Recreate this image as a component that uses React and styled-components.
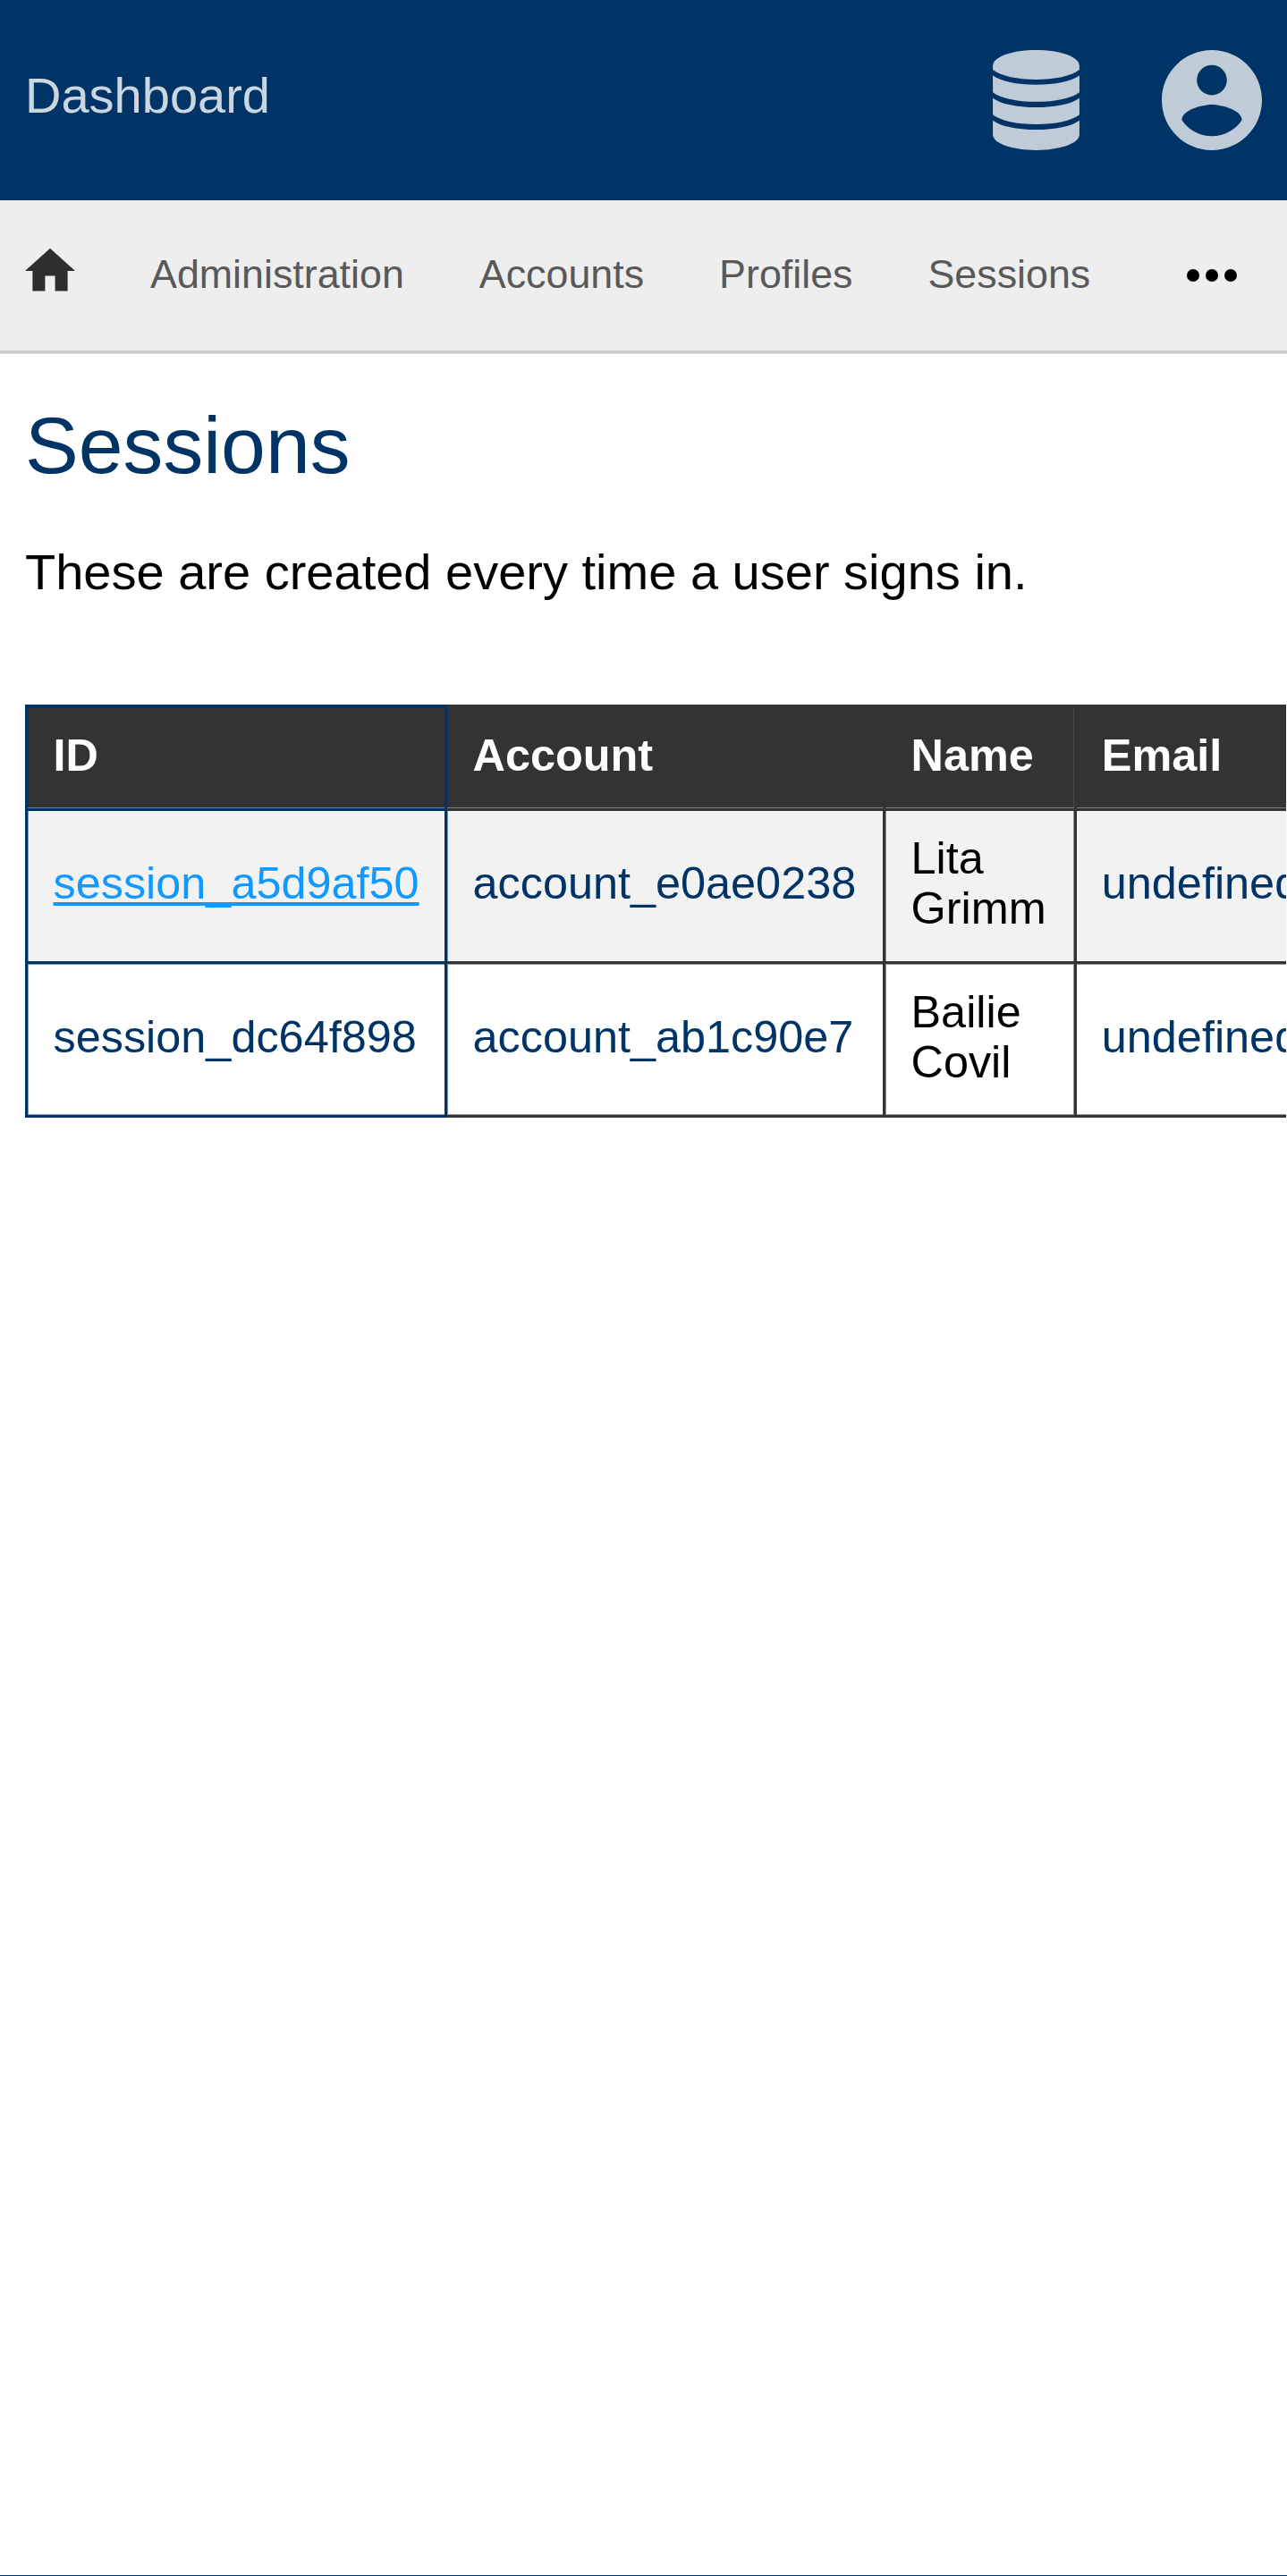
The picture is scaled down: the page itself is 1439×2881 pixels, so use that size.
import React from "react";
import styled, { createGlobalStyle } from "styled-components";

const NAVY = "#003366";
const INK = "#333333";

const GlobalStyle = createGlobalStyle`
  *, *::before, *::after { box-sizing: border-box; }
  html, body { margin: 0; padding: 0; }
  body {
    font-family: "Liberation Sans", Arial, sans-serif;
    font-size: 56px;
    color: #000;
    background: #fff;
  }
`;

const Page = styled.div`
  display: flex;
  flex-direction: column;
  width: 100%;
  height: 2881px;
  overflow: hidden;
  border-bottom: 1px solid ${NAVY};
`;

const Header = styled.header`
  display: flex;
  align-items: center;
  flex: none;
  height: 224px;
  padding: 0 28px;
  background: ${NAVY};
`;

const Brand = styled.a`
  flex: 1;
  padding-bottom: 11px;
  line-height: 63px;
  color: rgba(255, 255, 255, 0.8);
`;

const HeaderActions = styled.div`
  display: flex;
  gap: 84px;
  opacity: 0.75;
`;

const ActionIcon = styled.svg`
  display: block;
  width: 112px;
  height: 112px;
  fill: #fff;
`;

const Nav = styled.nav`
  display: flex;
  align-items: center;
  flex: none;
  gap: 84px;
  height: 171px;
  padding: 0 56px 0 28px;
  background: #eeeeee;
  border-bottom: 3px solid #cccccc;
  box-shadow: 0 1px 0 #e4e4e4;
  font-size: 44.8px;
`;

const NavIcon = styled.svg`
  display: block;
  flex: none;
  width: 56px;
  height: 56px;
  fill: ${(p) => p.$color};
  margin-bottom: ${(p) => p.$lift || 0}px;
  margin-left: ${(p) => (p.$end ? "auto" : "0")};
`;

const NavLink = styled.a`
  padding-bottom: 4px;
  line-height: 50px;
  white-space: nowrap;
  color: #595959;
`;

const Main = styled.main`
  padding: 53px 1px 0 28px;
`;

const Title = styled.h1`
  margin: 0;
  font-size: 89.6px;
  font-weight: 400;
  line-height: 100px;
  color: ${NAVY};
`;

const Intro = styled.p`
  margin: 60px 0 0;
  line-height: 63px;
`;

const TableScroller = styled.div`
  margin-top: 117px;
  overflow: hidden;
`;

const Table = styled.table`
  table-layout: fixed;
  width: 1572px;
  border-collapse: separate;
  border-spacing: 0;
  font-size: 50.4px;
  line-height: 56px;
`;

const Col = styled.col`
  width: ${(p) => p.$width}px;
`;

const HeadCell = styled.th`
  height: 119px;
  padding: 0 0 5px 28.5px;
  text-align: left;
  vertical-align: middle;
  color: #fff;
  background: ${INK};
  border: 3px solid ${INK};
  border-left-width: 0;
  box-shadow: inset 0 -1px 0 #808080;

  &:first-child {
    border-color: ${NAVY};
    border-left-width: 3px;
    box-shadow: inset 0 -1px 0 #66809a, inset 1px 1px 0 #1a334d;
  }

  &:nth-child(2) {
    box-shadow: inset 0 -1px 0 #808080, inset 1px 0 0 #1a334d;
  }

  &:nth-child(3) {
    box-shadow: inset 0 -1px 0 #808080, inset -1px 0 0 #4a4a4a;
  }

  &:last-child {
    padding-left: 27.8px;
  }
`;

const Cell = styled.td`
  padding: 0 0 0 28.5px;
  vertical-align: middle;
  color: ${(p) => (p.$plain ? "#000" : NAVY)};
  border: 0 solid ${INK};
  border-right-width: 3px;
  border-bottom-width: 3px;

  &:first-child {
    border-color: ${NAVY};
    border-left-width: 3px;
  }

  &:last-child {
    padding-left: 27.8px;
  }
`;

const BLUE_EDGE = "#7a96b1";
const GRAY_EDGE = "#949494";

const Row = styled.tr`
  background: ${(p) => (p.$shaded ? "#f2f2f2" : "#fff")};

  td {
    height: ${(p) => (p.$last ? 172 : 171)}px;
    padding-bottom: ${(p) => (p.$last ? 5 : 6)}px;
    --line: ${(p) =>
      p.$last
        ? `inset 0 1px 0 ${GRAY_EDGE}, inset 0 -1px 0 ${GRAY_EDGE}`
        : "0 0 0 transparent"};
    box-shadow: var(--line);
  }

  td:first-child {
    box-shadow: inset 1px ${(p) => (p.$last ? "1px" : "0")} 0 ${BLUE_EDGE}
      ${(p) => (p.$last ? `, inset 0 -1px 0 ${BLUE_EDGE}` : "")};
  }

  td:nth-child(2) {
    box-shadow: inset 1px 0 0 ${BLUE_EDGE}, var(--line);
  }

  td:nth-child(3) {
    box-shadow: inset 1px 0 0 ${GRAY_EDGE}, inset -1px 0 0 ${GRAY_EDGE}, var(--line);
  }
`;

const RecordLink = styled.a`
  color: ${(p) => (p.$active ? "#1199ff" : "inherit")};
  text-decoration: ${(p) => (p.$active ? "underline" : "none")};
  text-decoration-thickness: 3.5px;
  text-underline-offset: 3.5px;
  text-decoration-skip-ink: none;
`;

const NAV_ITEMS = ["Administration", "Accounts", "Profiles", "Sessions"];
const COLUMNS = [
  { label: "ID", width: 472 },
  { label: "Account", width: 490 },
  { label: "Name", width: 214 },
  { label: "Email", width: 396 },
];
const SESSIONS = [
  { id: "session_a5d9af50", account: "account_e0ae0238", name: "Lita Grimm", email: "undefined", active: true },
  { id: "session_dc64f898", account: "account_ab1c90e7", name: "Bailie Covil", email: "undefined", active: false },
];

function DatabaseIcon() {
  return (
    <ActionIcon viewBox="0 0 112 112">
      <path d="M7.1 17.8C7.1 7.6 28 0 55.5 0S103.9 7.6 103.9 17.8V22C95 29 76 33 55.5 33S16 29 7.1 22z" />
      <path d="M7.1 28.5C16 35 34 38.7 55.5 38.7S95 35 103.9 28.5V47.2C95 54 77 57.8 55.5 57.8S16 54 7.1 47.2z" />
      <path d="M7.1 53.7C16 60.3 34 64 55.5 64S95 60.3 103.9 53.7V72.3C95 79.2 77 83 55.5 83S16 79.2 7.1 72.3z" />
      <path d="M7.1 78.7C16 85.3 34 89 55.5 89S95 85.3 103.9 78.7V94.6C103.9 104.5 82 112 55.5 112S7.1 104.5 7.1 94.6z" />
    </ActionIcon>
  );
}

function AccountIcon() {
  return (
    <ActionIcon viewBox="2 2 20 20">
      <path d="M12 2C6.48 2 2 6.48 2 12s4.48 10 10 10 10-4.48 10-10S17.52 2 12 2zm0 3c1.66 0 3 1.34 3 3s-1.34 3-3 3-3-1.34-3-3 1.34-3 3-3zm0 14.2c-2.5 0-4.71-1.28-6-3.22.03-1.99 4-3.08 6-3.08 1.99 0 5.97 1.09 6 3.08-1.29 1.94-3.5 3.22-6 3.22z" />
    </ActionIcon>
  );
}

export default function App() {
  return (
    <>
      <GlobalStyle />
      <Page>
        <Header>
          <Brand>Dashboard</Brand>
          <HeaderActions>
            <DatabaseIcon />
            <AccountIcon />
          </HeaderActions>
        </Header>
        <Nav>
          <NavIcon viewBox="2 2 20 20" $color="#2e2e2e" $lift={11}>
            <path d="M10 20v-6h4v6h5v-8h3L12 3 2 12h3v8z" />
          </NavIcon>
          {NAV_ITEMS.map((item) => (
            <NavLink key={item}>{item}</NavLink>
          ))}
          <NavIcon viewBox="4 4 16 16" $color="#000" $end>
            <circle cx="6" cy="12" r="2" />
            <circle cx="12" cy="12" r="2" />
            <circle cx="18" cy="12" r="2" />
          </NavIcon>
        </Nav>
        <Main>
          <Title>Sessions</Title>
          <Intro>These are created every time a user signs in.</Intro>
          <TableScroller>
            <Table>
              <colgroup>
                {COLUMNS.map((c) => (
                  <Col key={c.label} $width={c.width} />
                ))}
              </colgroup>
              <thead>
                <tr>
                  {COLUMNS.map((c) => (
                    <HeadCell key={c.label}>{c.label}</HeadCell>
                  ))}
                </tr>
              </thead>
              <tbody>
                {SESSIONS.map((s, i) => (
                  <Row key={s.id} $shaded={i % 2 === 0} $last={i === SESSIONS.length - 1}>
                    <Cell>
                      <RecordLink $active={s.active}>{s.id}</RecordLink>
                    </Cell>
                    <Cell>
                      <RecordLink>{s.account}</RecordLink>
                    </Cell>
                    <Cell $plain>{s.name}</Cell>
                    <Cell>
                      <RecordLink>{s.email}</RecordLink>
                    </Cell>
                  </Row>
                ))}
              </tbody>
            </Table>
          </TableScroller>
        </Main>
      </Page>
    </>
  );
}
